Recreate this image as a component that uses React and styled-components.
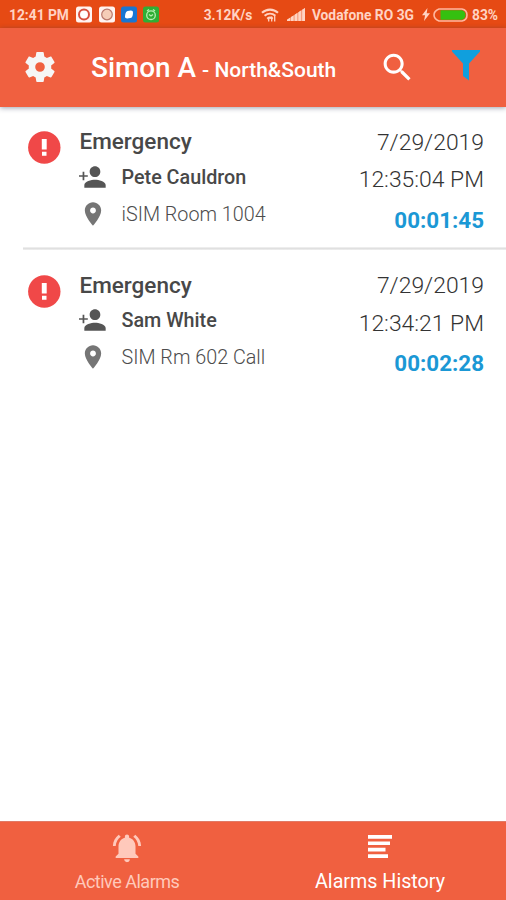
import React from "react";
import styled, { createGlobalStyle } from "styled-components";

const GlobalStyle = createGlobalStyle`
  *, *::before, *::after { box-sizing: border-box; }
  html, body { margin: 0; padding: 0; background: #fff; }
  body { font-family: Roboto, sans-serif; }
  svg { display: block; flex: none; }
`;

const Screen = styled.div`
  width: 506px;
  height: 900px;
  display: flex;
  flex-direction: column;
  overflow: hidden;
  background: #fff;
`;

const StatusBar = styled.div`
  height: 28px;
  flex: none;
  display: flex;
  align-items: center;
  padding: 1px 8px 0 9px;
  background: #e64a14;
  color: #ffd3c3;
`;

const StatusText = styled.span`
  font-size: 13.8px;
  font-weight: 700;
  line-height: 16px;
  white-space: nowrap;
  margin-right: ${(p) => p.$gap || "0"};
`;

const AppIcons = styled.div`
  display: flex;
  gap: 6.3px;
  flex: 1;
`;

const StatusIcons = styled.div`
  display: flex;
  align-items: center;
  gap: 8.5px;
  margin-right: 6.5px;
`;

const Power = styled.div`
  display: flex;
  align-items: center;
  gap: 3px;
  margin-right: 4px;
`;

const AppBar = styled.header`
  height: 79px;
  flex: none;
  display: flex;
  align-items: center;
  padding: 0 26.5px 1px 22px;
  background: #f06040;
  color: #fff;
  box-shadow: 0 1px 5px rgba(40, 50, 80, 0.45);
`;

const Title = styled.h1`
  flex: 1;
  margin: 4px 0 0 33px;
  font-size: 27.9px;
  font-weight: 500;
  line-height: 34px;
  white-space: nowrap;
`;

const Subtitle = styled.span`
  font-size: 21px;
  margin-left: 6px;
`;

const Actions = styled.div`
  display: flex;
  align-items: center;
  gap: 36px;
`;

const FilterButton = styled.span`
  padding-bottom: 4px;
`;

const List = styled.main`
  flex: 1;
`;

const AlarmRow = styled.article`
  height: 143.5px;
  display: flex;
  padding: 0 22px 0 28px;
`;

const Divider = styled.hr`
  height: 3px;
  margin: -4px 0 1px 23px;
  border: 0;
  background: linear-gradient(#f3f3f3, #e0e0e0, #f0f0f0);
`;

const Badge = styled.div`
  width: 51.5px;
  padding-top: 24px;
`;

const Details = styled.div`
  flex: 1;
  padding-top: 17.4px;
`;

const Kind = styled.h2`
  margin: 0;
  font-size: 22.5px;
  font-weight: 500;
  line-height: 34.6px;
  color: #484848;
`;

const Detail = styled.div`
  height: 37px;
  display: flex;
  align-items: center;
  font-size: 19.75px;
  font-weight: ${(p) => (p.$strong ? 500 : 300)};
  color: ${(p) => (p.$strong ? "#484848" : "#4c4c4c")};
  white-space: nowrap;
`;

const DetailIcon = styled.span`
  width: 42px;
  display: flex;
  margin-top: -1px;
  margin-left: -0.8px;
  margin-right: 0.8px;
  color: ${(p) => p.$color};
`;

const Times = styled.div`
  display: flex;
  flex-direction: column;
  align-items: flex-end;
  padding-top: 16.6px;
  font-size: 22.9px;
  font-weight: 300;
  color: #333;
`;

const Stamp = styled.span`
  line-height: 37.5px;
`;

const Elapsed = styled.span`
  font-size: 22.4px;
  line-height: 43px;
  font-weight: 700;
  color: #1b98d5;
`;

const TabBar = styled.nav`
  height: 79px;
  flex: none;
  display: flex;
  background: #f06040;
  border-top: 1px solid #e07a66;
`;

const Tab = styled.div`
  flex: 1;
  display: flex;
  flex-direction: column;
  align-items: center;
  padding-top: 9px;
  color: ${(p) => (p.$active ? "#fff" : "#ffc9bb")};
`;

const TabLabel = styled.span`
  font-size: ${(p) => (p.$active ? 19.7 : 18)}px;
  letter-spacing: ${(p) => (p.$active ? 0 : -0.5)}px;
  padding-left: 1px;
  line-height: 24px;
  margin-top: 4.5px;
`;

const AppIcon = ({ bg, children }) => (
  <svg width="16" height="17" viewBox="0 0 16 16">
    <rect width="16" height="16" rx="2.5" fill={bg} />
    {children}
  </svg>
);

const Wifi = () => (
  <svg width="18" height="14" viewBox="0 0 18 14" fill="none" stroke="currentColor" strokeWidth="2.1">
    <path d="M1 4.800C5.600.5 12.400.5 17 4.800M3.600 7.800c3.200-2.800 7.600-2.800 10.800 0M6.200 10.700c1.700-1.400 3.900-1.400 5.600 0" />
    <path d="M7.700 13.600V11M10.700 8.500v5.100M13.700 8v5.600" strokeWidth="1.300" />
  </svg>
);

const Signal = () => (
  <svg width="18" height="13" viewBox="0 0 18 13" fill="currentColor">
    <path d="M0 13v-1.300L18 0v13z" opacity=".6" />
    <path d="M0 13v-1.300l3-2V13zM4 13V9l2.500-1.600V13zM7.700 13V6.700l2.500-1.700v8zM11.400 13V4.300l2.500-1.700V13zM15.200 13V1.800L18 0v13z" />
  </svg>
);

const Bolt = () => (
  <svg width="8" height="13" viewBox="0 0 8 13" fill="currentColor">
    <path d="M5.500 0 0 7.300h3.100L2 13l6-7.800H4.700z" />
  </svg>
);

const Battery = () => (
  <svg width="35" height="14" viewBox="0 0 35 14">
    <path d="M6 1h23q5 1 5 6t-5 6H6Q1 11 1 7t5-6z" fill="none" stroke="#ffb79f" strokeWidth="1.600" />
    <path d="M7.500 2.300h21.500q3.500 1 3.500 4.700T29 11.700H7.500z" fill="#35c010" />
  </svg>
);

const Gear = () => (
  <svg width="36" height="36" viewBox="0 0 24 24" fill="#f6f6f6">
    <path d="M19.43 12.98c.04-.32.07-.64.07-.98s-.03-.66-.07-.98l2.110-1.650c.190-.150.240-.420.120-.640l-2-3.460c-.120-.220-.390-.300-.610-.220l-2.490 1c-.520-.400-1.080-.730-1.690-.980l-.380-2.650C14.460 2.180 14.250 2 14 2h-4c-.250 0-.460.180-.490.420l-.380 2.650c-.610.250-1.170.590-1.690.980l-2.490-1c-.230-.090-.490 0-.610.220l-2 3.460c-.130.220-.070.490.120.640l2.110 1.650c-.040.320-.070.650-.070.980s.030.660.070.980l-2.110 1.650c-.190.150-.240.420-.120.640l2 3.460c.120.220.390.300.610.220l2.490-1c.520.400 1.080.730 1.690.980l.380 2.650c.030.240.240.420.490.420h4c.250 0 .460-.180.490-.420l.380-2.650c.610-.250 1.170-.590 1.690-.980l2.490 1c.230.090.490 0 .610-.220l2-3.460c.120-.220.070-.490-.120-.640zM12 15.200a3.200 3.200 0 1 1 0-6.400 3.200 3.200 0 0 1 0 6.400z" />
  </svg>
);

const Search = () => (
  <svg width="37" height="37" viewBox="0 0 24 24" fill="currentColor">
    <path d="M15.500 14h-.79l-.28-.27C15.410 12.590 16 11.110 16 9.500 16 5.910 13.090 3 9.500 3S3 5.910 3 9.500 5.910 16 9.500 16c1.610 0 3.090-.59 4.230-1.570l.27.28v.79l5 4.990L20.490 19l-4.990-5zm-6 0C7.010 14 5 11.990 5 9.500S7.010 5 9.500 5 14 7.010 14 9.500 11.990 14 9.500 14z" />
  </svg>
);

const Funnel = () => (
  <svg width="28" height="31" viewBox="0 0 28 31" fill="#109fdd">
    <path d="M0 0h28v1.500L17 13.500v17L11 26V13.500L0 1.500z" />
  </svg>
);

const Alert = () => (
  <svg width="33" height="33" viewBox="0 0 33 33">
    <circle cx="16.300" cy="16.500" r="16.200" fill="#f04848" />
    <path d="M13.800 8h4.900v10.500h-4.900zM14 20.800h4.500v4H14z" fill="#fff" />
  </svg>
);

const PersonAdd = () => (
  <svg width="28" height="32" viewBox="3 0 21 24" fill="currentColor">
    <path d="M15 12c2.210 0 4-1.790 4-4s-1.790-4-4-4-4 1.790-4 4 1.790 4 4 4zm0 2c-2.670 0-8 1.340-8 4v2h16v-2c0-2.660-5.330-4-8-4zM5.700 8h1.300v2.600h2.600v1.300H7v2.600H5.700v-2.600H3v-1.300h2.700z" />
  </svg>
);

const Pin = () => (
  <svg width="28" height="28" viewBox="0 0 24 24" fill="currentColor">
    <path d="M12 2C8.130 2 5 5.130 5 9c0 5.250 7 13 7 13s7-7.750 7-13c0-3.870-3.130-7-7-7zm0 9.500c-1.380 0-2.500-1.120-2.500-2.500s1.120-2.500 2.500-2.500 2.500 1.120 2.500 2.500-1.120 2.500-2.500 2.500z" />
  </svg>
);

const Bell = () => (
  <svg width="34" height="34" viewBox="0 0 24 24" fill="currentColor">
    <path d="M7.580 4.080 6.150 2.650C3.750 4.480 2.170 7.300 2.030 10.500h2c.15-2.650 1.510-4.970 3.550-6.420zm12.390 6.420h2c-.15-3.200-1.730-6.020-4.120-7.850l-1.420 1.430c2.020 1.450 3.390 3.770 3.540 6.420zM18 11c0-3.070-1.640-5.640-4.500-6.320V4c0-.83-.67-1.500-1.500-1.500s-1.500.67-1.500 1.500v.68C7.630 5.360 6 7.920 6 11v5l-2 2v1h16v-1l-2-2v-5zm-6 11c.14 0 .27-.01.4-.04.65-.14 1.180-.58 1.440-1.180.1-.24.15-.5.15-.78h-4c.01 1.100.9 2 2.010 2z" />
  </svg>
);

const Lines = () => (
  <svg width="24" height="34" viewBox="0 0 24 34" fill="currentColor">
    <path d="M0 4h24v3.700H0zM0 10.400h22v3.700H0zM0 16.800h17.500v3.700H0zM0 23.200h20v3.700H0z" />
  </svg>
);

const alarms = [
  { kind: "Emergency", person: "Pete Cauldron", room: "iSIM Room 1004", date: "7/29/2019", time: "12:35:04 PM", elapsed: "00:01:45" },
  { kind: "Emergency", person: "Sam White", room: "SIM Rm 602 Call", date: "7/29/2019", time: "12:34:21 PM", elapsed: "00:02:28" },
];

const Alarm = ({ alarm }) => (
  <AlarmRow>
    <Badge><Alert /></Badge>
    <Details>
      <Kind>{alarm.kind}</Kind>
      <Detail $strong><DetailIcon $color="#555"><PersonAdd /></DetailIcon>{alarm.person}</Detail>
      <Detail><DetailIcon $color="#757575"><Pin /></DetailIcon>{alarm.room}</Detail>
    </Details>
    <Times>
      <Stamp>{alarm.date}</Stamp>
      <Stamp>{alarm.time}</Stamp>
      <Elapsed>{alarm.elapsed}</Elapsed>
    </Times>
  </AlarmRow>
);

export default function App() {
  return (
    <Screen>
      <GlobalStyle />
      <StatusBar>
        <StatusText $gap="7.5px">12:41 PM</StatusText>
        <AppIcons>
          <AppIcon bg="#fff3f0"><circle cx="8" cy="8" r="5" fill="#fff" stroke="#d8503f" strokeWidth="2" /></AppIcon>
          <AppIcon bg="#fff3f0"><circle cx="8" cy="8" r="5.300" fill="#f5cdb8" stroke="#b9786c" strokeWidth="1.200" /></AppIcon>
          <AppIcon bg="#1976d2"><path d="M6.500 4.500q4-1 5 0t0 5q-.5 2-2 2-4 .8-5 0t0-4.500q.3-2 2-2.500z" fill="#fff" /></AppIcon>
          <AppIcon bg="#2fae35">
            <circle cx="8" cy="8.700" r="4.300" fill="none" stroke="#b6eeb0" strokeWidth="1.300" />
            <path d="M4 4.500 6 3M12 4.500 10 3M6 8l2 1.500L10 8" fill="none" stroke="#b6eeb0" strokeWidth="1.300" />
          </AppIcon>
        </AppIcons>
        <StatusText $gap="8.5px">3.12K/s</StatusText>
        <StatusIcons><Wifi /><Signal /></StatusIcons>
        <StatusText $gap="8px">Vodafone RO 3G</StatusText>
        <Power><Bolt /><Battery /></Power>
        <StatusText>83%</StatusText>
      </StatusBar>
      <AppBar>
        <Gear />
        <Title>Simon A<Subtitle>- North&amp;South</Subtitle></Title>
        <Actions><Search /><FilterButton><Funnel /></FilterButton></Actions>
      </AppBar>
      <List>
        <Alarm alarm={alarms[0]} />
        <Divider />
        <Alarm alarm={alarms[1]} />
      </List>
      <TabBar>
        <Tab><Bell /><TabLabel>Active Alarms</TabLabel></Tab>
        <Tab $active><Lines /><TabLabel $active>Alarms History</TabLabel></Tab>
      </TabBar>
    </Screen>
  );
}
